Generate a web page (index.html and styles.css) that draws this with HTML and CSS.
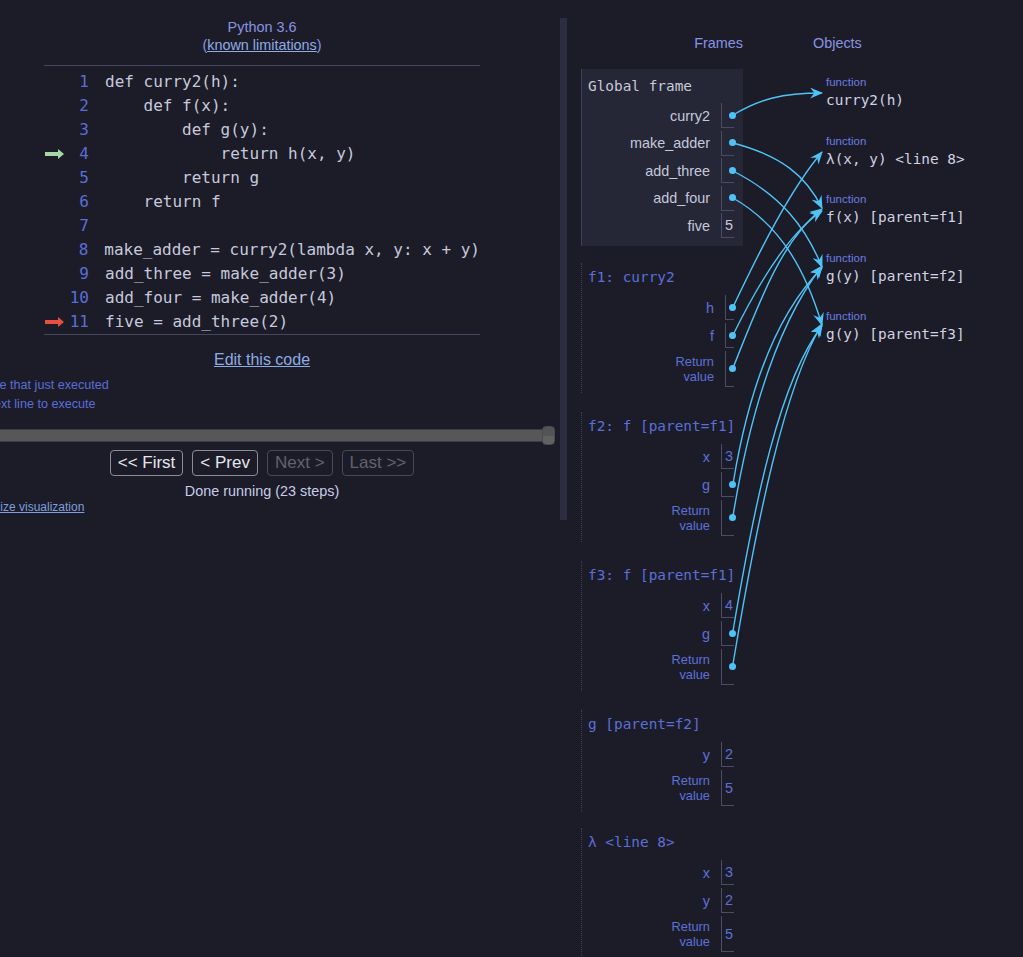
FILE: index.html
```html
<!DOCTYPE html>
<html lang="en">
<head>
<meta charset="utf-8">
<title>Python Tutor</title>
<link rel="stylesheet" href="styles.css">
</head>
<body>
<div class="page">
  <div class="left">
    <header class="lang">
      <div>Python 3.6</div>
      <div>(<a href="#">known limitations</a>)</div>
    </header>
    <div class="code">
      <div class="line"><span class="mark"></span><span class="num">1</span><span class="src">def curry2(h):</span></div>
      <div class="line"><span class="mark"></span><span class="num">2</span><span class="src">    def f(x):</span></div>
      <div class="line"><span class="mark"></span><span class="num">3</span><span class="src">        def g(y):</span></div>
      <div class="line"><span class="mark"><svg width="19" height="10" viewBox="0 0 19 10"><path d="M0 3h13V0l6 5-6 5V7H0z" fill="#a6d8a3"/></svg></span><span class="num">4</span><span class="src">            return h(x, y)</span></div>
      <div class="line"><span class="mark"></span><span class="num">5</span><span class="src">        return g</span></div>
      <div class="line"><span class="mark"></span><span class="num">6</span><span class="src">    return f</span></div>
      <div class="line"><span class="mark"></span><span class="num">7</span><span class="src"></span></div>
      <div class="line"><span class="mark"></span><span class="num">8</span><span class="src">make_adder = curry2(lambda x, y: x + y)</span></div>
      <div class="line"><span class="mark"></span><span class="num">9</span><span class="src">add_three = make_adder(3)</span></div>
      <div class="line"><span class="mark"></span><span class="num">10</span><span class="src">add_four = make_adder(4)</span></div>
      <div class="line"><span class="mark"><svg width="19" height="10" viewBox="0 0 19 10"><path d="M0 3h13V0l6 5-6 5V7H0z" fill="#e6503f"/></svg></span><span class="num">11</span><span class="src">five = add_three(2)</span></div>
    </div>
    <div class="edit"><a href="#">Edit this code</a></div>
    <div class="controls">
      <div class="legend">
        <div class="legend-row"><svg width="15" height="8" viewBox="0 0 19 10"><path d="M0 3h13V0l6 5-6 5V7H0z" fill="#a6d8a3"/></svg><span>line that just executed</span></div>
        <div class="legend-row"><svg width="15" height="8" viewBox="0 0 19 10"><path d="M0 3h13V0l6 5-6 5V7H0z" fill="#e6503f"/></svg><span>next line to execute</span></div>
      </div>
      <div class="slider"><span class="handle"></span></div>
      <div class="buttons">
        <button>&lt;&lt; First</button>
        <button>&lt; Prev</button>
        <button disabled>Next &gt;</button>
        <button disabled>Last &gt;&gt;</button>
      </div>
      <div class="done">Done running (23 steps)</div>
      <div class="customize"><a href="#">Customize visualization</a></div>
    </div>
  </div>

  <div class="divider"></div>

  <div class="right">
    <div class="heads"><div class="fh">Frames</div><div class="oh">Objects</div></div>
    <div class="viz">
      <div class="frames">
        <div class="frame global">
          <div class="ftitle">Global frame</div>
          <div class="vars">
            <div class="vname">curry2</div><div class="val"><span class="dot"></span></div>
            <div class="vname">make_adder</div><div class="val"><span class="dot"></span></div>
            <div class="vname">add_three</div><div class="val"><span class="dot"></span></div>
            <div class="vname">add_four</div><div class="val"><span class="dot"></span></div>
            <div class="vname">five</div><div class="val">5</div>
          </div>
        </div>
        <div class="frame">
          <div class="ftitle">f1: curry2</div>
          <div class="vars">
            <div class="vname">h</div><div class="val"><span class="dot"></span></div>
            <div class="vname">f</div><div class="val"><span class="dot"></span></div>
            <div class="vname ret">Return<br>value</div><div class="val tall"><span class="dot"></span></div>
          </div>
        </div>
        <div class="frame">
          <div class="ftitle">f2: f [parent=f1]</div>
          <div class="vars">
            <div class="vname">x</div><div class="val">3</div>
            <div class="vname">g</div><div class="val"><span class="dot"></span></div>
            <div class="vname ret">Return<br>value</div><div class="val tall"><span class="dot"></span></div>
          </div>
        </div>
        <div class="frame">
          <div class="ftitle">f3: f [parent=f1]</div>
          <div class="vars">
            <div class="vname">x</div><div class="val">4</div>
            <div class="vname">g</div><div class="val"><span class="dot"></span></div>
            <div class="vname ret">Return<br>value</div><div class="val tall"><span class="dot"></span></div>
          </div>
        </div>
        <div class="frame short">
          <div class="ftitle">g [parent=f2]</div>
          <div class="vars">
            <div class="vname">y</div><div class="val">2</div>
            <div class="vname ret">Return<br>value</div><div class="val tall">5</div>
          </div>
        </div>
        <div class="frame">
          <div class="ftitle">λ &lt;line 8&gt;</div>
          <div class="vars">
            <div class="vname">x</div><div class="val">3</div>
            <div class="vname">y</div><div class="val">2</div>
            <div class="vname ret">Return<br>value</div><div class="val tall">5</div>
          </div>
        </div>
      </div>
      <div class="objects">
        <div class="obj"><div class="type">function</div><div class="fn">curry2(h)</div></div>
        <div class="obj"><div class="type">function</div><div class="fn">λ(x, y) &lt;line 8&gt;</div></div>
        <div class="obj"><div class="type">function</div><div class="fn">f(x) [parent=f1]</div></div>
        <div class="obj"><div class="type">function</div><div class="fn">g(y) [parent=f2]</div></div>
        <div class="obj"><div class="type">function</div><div class="fn">g(y) [parent=f3]</div></div>
      </div>
    </div>
  </div>

  <svg class="arrows" width="1023" height="957" viewBox="0 0 1023 957">
    <defs>
      <marker id="ah" viewBox="0 0 12 10" refX="11" refY="5" markerWidth="13" markerHeight="11" markerUnits="userSpaceOnUse" orient="auto">
        <path d="M0,0 L12,5 L0,10 L4,5 Z" fill="#4fc3f7"/>
      </marker>
    </defs>
    <g fill="none" stroke="#4fc3f7" stroke-width="1.4" marker-end="url(#ah)">
      <path d="M733,115 C760,99 782,93 822,93"/>
      <path d="M733,143 C782,156 806,176 822,208"/>
      <path d="M733,171 C782,196 806,228 822,267"/>
      <path d="M733,198 C782,226 806,272 822,325"/>
      <path d="M733,307 C760,250 790,190 822,152"/>
      <path d="M733,335 C760,280 790,232 822,211"/>
      <path d="M733,368 C760,300 782,240 822,209"/>
      <path d="M733,484 C750,380 780,310 822,268"/>
      <path d="M733,516 C752,400 782,318 822,266"/>
      <path d="M733,631 C755,500 780,380 822,326"/>
      <path d="M733,664 C757,520 784,388 822,324"/>
    </g>
  </svg>
</div>
</body>
</html>
```
FILE: styles.css
```css
* { box-sizing: border-box; }
html, body { margin: 0; background: #1c1c28; }
body { font-family: "Liberation Sans", Arial, sans-serif; color: #c8cbe0; }
a { color: #8eabe4; text-decoration: underline; }

.page { position: relative; display: flex; width: 1023px; height: 957px; overflow: hidden; }

/* left column */
.left { width: 560px; flex-shrink: 0; overflow: hidden; }
.lang { width: 524px; padding-top: 18px; text-align: center; font-size: 14.4px; line-height: 18px; color: #8794e2; }

.code {
  margin: 11px 0 0 44px; width: 436px;
  border-top: 1px solid #46475c; border-bottom: 1px solid #46475c;
  padding-top: 4px;
  font-family: "DejaVu Sans Mono", monospace; font-size: 16px; line-height: 24px;
}
.line { display: flex; align-items: center; height: 24px; }
.mark { width: 20px; height: 24px; display: flex; align-items: center; padding-left: 1px; }
.num { width: 25px; text-align: right; color: #5a6ed8; }
.src { margin-left: 16px; white-space: pre; color: #c6c9dc; }

.edit { width: 524px; margin-top: 14px; text-align: center; font-size: 16px; line-height: 21px; }

.controls { margin-left: -42px; width: 608px; }
.legend { margin-top: 6px; padding-left: 8px; font-size: 12.6px; line-height: 19px; color: #5a6ed8; }
.legend-row { display: flex; align-items: center; gap: 6px; }

.slider { position: relative; margin: 14.5px 17px 0 0; height: 13px; background: #575757; border: 1px solid #3b3b4d; }
.handle {
  position: absolute; right: -7px; top: -4px; width: 13px; height: 19px;
  border-radius: 4px; border: 1px solid #4a4a56;
  background: linear-gradient(#545454 50%, #616161 50%);
}

.buttons { margin-top: 8px; display: flex; justify-content: center; gap: 9px; }
.buttons button {
  font-family: "Liberation Sans", Arial, sans-serif; font-size: 17px; line-height: 24px;
  height: 26px; padding: 0 7px; border: 1px solid #8c8c9c; border-radius: 4px;
  background: #1c1c28; color: #e6e6ee;
}
.buttons button:disabled { color: #62626f; border-color: #484856; }

.done { margin-top: 6px; text-align: center; font-size: 14.4px; line-height: 18px; color: #c8cce8; }
.customize { padding-left: 1px; font-size: 12px; line-height: 14px; }
.customize a { color: #7d9edf; }

.divider { width: 7px; flex-shrink: 0; margin-top: 18px; height: 502px; background: #2c2d40; }

/* right column */
.right { flex: 1; padding: 34px 0 0 14px; }
.heads { display: flex; font-size: 14.4px; line-height: 18px; color: #8794e2; }
.heads .fh { width: 162px; text-align: right; }
.heads .oh { margin-left: 70px; }

.viz { display: flex; align-items: flex-start; margin-top: 17px; }
.frames { width: 162px; flex-shrink: 0; }

.frame { border-left: 1px dotted #3e3f55; padding: 5px 9px 6px 6px; margin-bottom: 19px; }
.frame.short { margin-bottom: 16px; }
.frame.global { background: #262736; border-left: 1px solid #3f4056; padding-top: 8px; padding-bottom: 8px; margin-bottom: 17px; }
.ftitle { font-family: "DejaVu Sans Mono", monospace; font-size: 14.4px; line-height: 18px; color: #5b6fd8; white-space: pre; }
.global .ftitle { color: #c8cad8; }

.vars { display: grid; grid-template-columns: auto auto; justify-content: end; column-gap: 11px; row-gap: 3px; margin-top: 9px; }
.global .vars { margin-top: 8px; row-gap: 2.5px; }
.vname { text-align: right; align-self: center; font-size: 14.4px; line-height: 18px; color: #5d70d8; }
.global .vname { color: #c4c7dd; }
.vname.ret { font-size: 12.8px; line-height: 15px; }

.val {
  min-height: 25px; display: flex; align-items: center; justify-content: flex-end;
  border-left: 1px solid #4b4d66; border-bottom: 1px solid #4b4d66;
  padding: 0 1px 0 3px; font-size: 14.4px; color: #5d70d8;
}
.global .val { color: #c8cad8; }
.val.tall { min-height: 36px; }
.dot { display: block; width: 7px; height: 7px; border-radius: 50%; background: #4fc3f7; margin-right: -3px; }

.objects { margin-left: 83px; padding-top: 6px; display: flex; flex-direction: column; gap: 21.5px; }
.obj .type { font-size: 11.5px; line-height: 14px; color: #6a7ce0; }
.obj .fn { font-family: "DejaVu Sans Mono", monospace; font-size: 14.4px; line-height: 23px; color: #d0d2e2; white-space: pre; }

.arrows { position: absolute; top: 0; left: 0; pointer-events: none; }
```
